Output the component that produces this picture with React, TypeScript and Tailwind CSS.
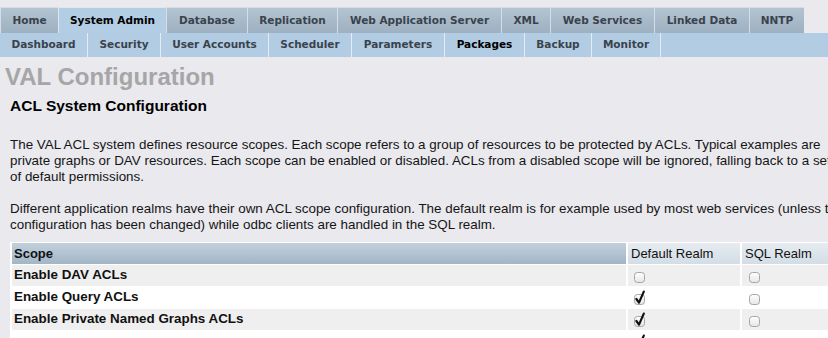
import React from "react";

const topTabs = [
  { label: "Home", w: 58 },
  { label: "System Admin", w: 108, active: true },
  { label: "Database", w: 81 },
  { label: "Replication", w: 90 },
  { label: "Web Application Server", w: 164 },
  { label: "XML", w: 49 },
  { label: "Web Services", w: 104 },
  { label: "Linked Data", w: 95 },
  { label: "NNTP", w: 55 },
];

const subTabs = [
  { label: "Dashboard", w: 88 },
  { label: "Security", w: 73 },
  { label: "User Accounts", w: 108 },
  { label: "Scheduler", w: 83 },
  { label: "Parameters", w: 93 },
  { label: "Packages", w: 80, active: true },
  { label: "Backup", w: 67 },
  { label: "Monitor", w: 69 },
];

const rows = [
  { label: "Enable DAV ACLs", def: false, sql: false },
  { label: "Enable Query ACLs", def: true, sql: false },
  { label: "Enable Private Named Graphs ACLs", def: true, sql: false },
  { label: "", def: true, sql: false },
];

function Box({ checked }: { checked: boolean }) {
  return (
    <svg width="14" height="16" viewBox="0 0 14 16" className="ml-[4px] block">
      <defs>
        <linearGradient id="cbg" x1="0" y1="0" x2="0" y2="1">
          <stop offset="0" stopColor="#ffffff" />
          <stop offset="1" stopColor="#e6e6e6" />
        </linearGradient>
      </defs>
      <rect x="1.5" y="4.5" width="10" height="10" rx="3" fill="url(#cbg)" stroke="#a4a4a4" strokeWidth="1" />
      {checked && (
        <path d="M3.4 9 L6 12.6 L10.8 1.6" fill="none" stroke="#111" strokeWidth="2.2" strokeLinecap="round" strokeLinejoin="round" />
      )}
    </svg>
  );
}

export default function App() {
  return (
    <div className="w-[828px] h-[338px] overflow-hidden bg-[#e9e9ee] font-['Liberation_Sans',Arial,sans-serif] text-[#111]">
      <div className="pt-[7px] font-['DejaVu_Sans',Verdana,sans-serif] font-bold text-[10.5px]">
        <div className="flex h-[26px]">
          {topTabs.map((t) => (
            <div
              key={t.label}
              style={{ width: t.w }}
              className={
                t.active
                  ? "flex items-center justify-center border-t border-l border-[#dfe6ec] bg-[#b2cde4] text-black"
                  : "flex items-center justify-center border-t border-l border-[#d6dde4] bg-gradient-to-b from-[#b3c3d1] to-[#9eb1c2] text-[#3a434c]"
              }
            >
              {t.label}
            </div>
          ))}
        </div>
        <div className="flex h-[24px] bg-[#b1cce3]">
          {subTabs.map((t) => (
            <div
              key={t.label}
              style={{ width: t.w }}
              className={
                t.active
                  ? "flex items-center justify-center border-r border-[#e4ecf3] text-black"
                  : "flex items-center justify-center border-r border-[#e4ecf3] text-[#3a434c]"
              }
            >
              {t.label}
            </div>
          ))}
        </div>
      </div>

      <h1 className="mt-[6px] ml-[5px] text-[24px] leading-[28px] font-bold text-[#a6a6a6]">VAL Configuration</h1>
      <h2 className="mt-[5px] ml-[10px] text-[15.5px] leading-[20px] font-bold text-black">ACL System Configuration</h2>

      <div className="mt-[21px] ml-[10px] text-[13.4px] leading-[16px] text-[#151515] whitespace-nowrap">
        <p>
          <span className="block">The VAL ACL system defines resource scopes. Each scope refers to a group of resources to be protected by ACLs. Typical examples are</span>
          <span className="block">private graphs or DAV resources. Each scope can be enabled or disabled. ACLs from a disabled scope will be ignored, falling back to a set</span>
          <span className="block">of default permissions.</span>
        </p>
        <p className="mt-[16px]">
          <span className="block">Different application realms have their own ACL scope configuration. The default realm is for example used by most web services (unless the</span>
          <span className="block">configuration has been changed) while odbc clients are handled in the SQL realm.</span>
        </p>
      </div>

      <div className="mt-[9px] ml-[10px] w-[840px] bg-white p-[2px] pt-[1px] grid grid-cols-[614px_112px_100px] gap-x-[2px] gap-y-[1px] text-[13px]">
        <div className="h-[21px] flex items-center px-[2px] font-bold bg-gradient-to-b from-[#c2d0dc] to-[#a2b6c7]">Scope</div>
        <div className="h-[21px] flex items-center px-[3px] bg-gradient-to-b from-[#e6ecf1] to-[#d3dde6]">Default Realm</div>
        <div className="h-[21px] flex items-center px-[3px] bg-gradient-to-b from-[#e6ecf1] to-[#d3dde6]">SQL Realm</div>
        {rows.map((r, i) => {
          const bg = i % 2 === 0 ? "bg-[#efefef]" : "bg-white";
          return (
            <React.Fragment key={i}>
              <div className={`h-[21px] flex items-center px-[2px] font-bold text-[13.4px] ${bg}`}>{r.label}</div>
              <div className={`h-[21px] flex items-center px-[1px] ${bg}`}>
                <Box checked={r.def} />
              </div>
              <div className={`h-[21px] flex items-center px-[2px] ${bg}`}>
                <Box checked={r.sql} />
              </div>
            </React.Fragment>
          );
        })}
      </div>
    </div>
  );
}
